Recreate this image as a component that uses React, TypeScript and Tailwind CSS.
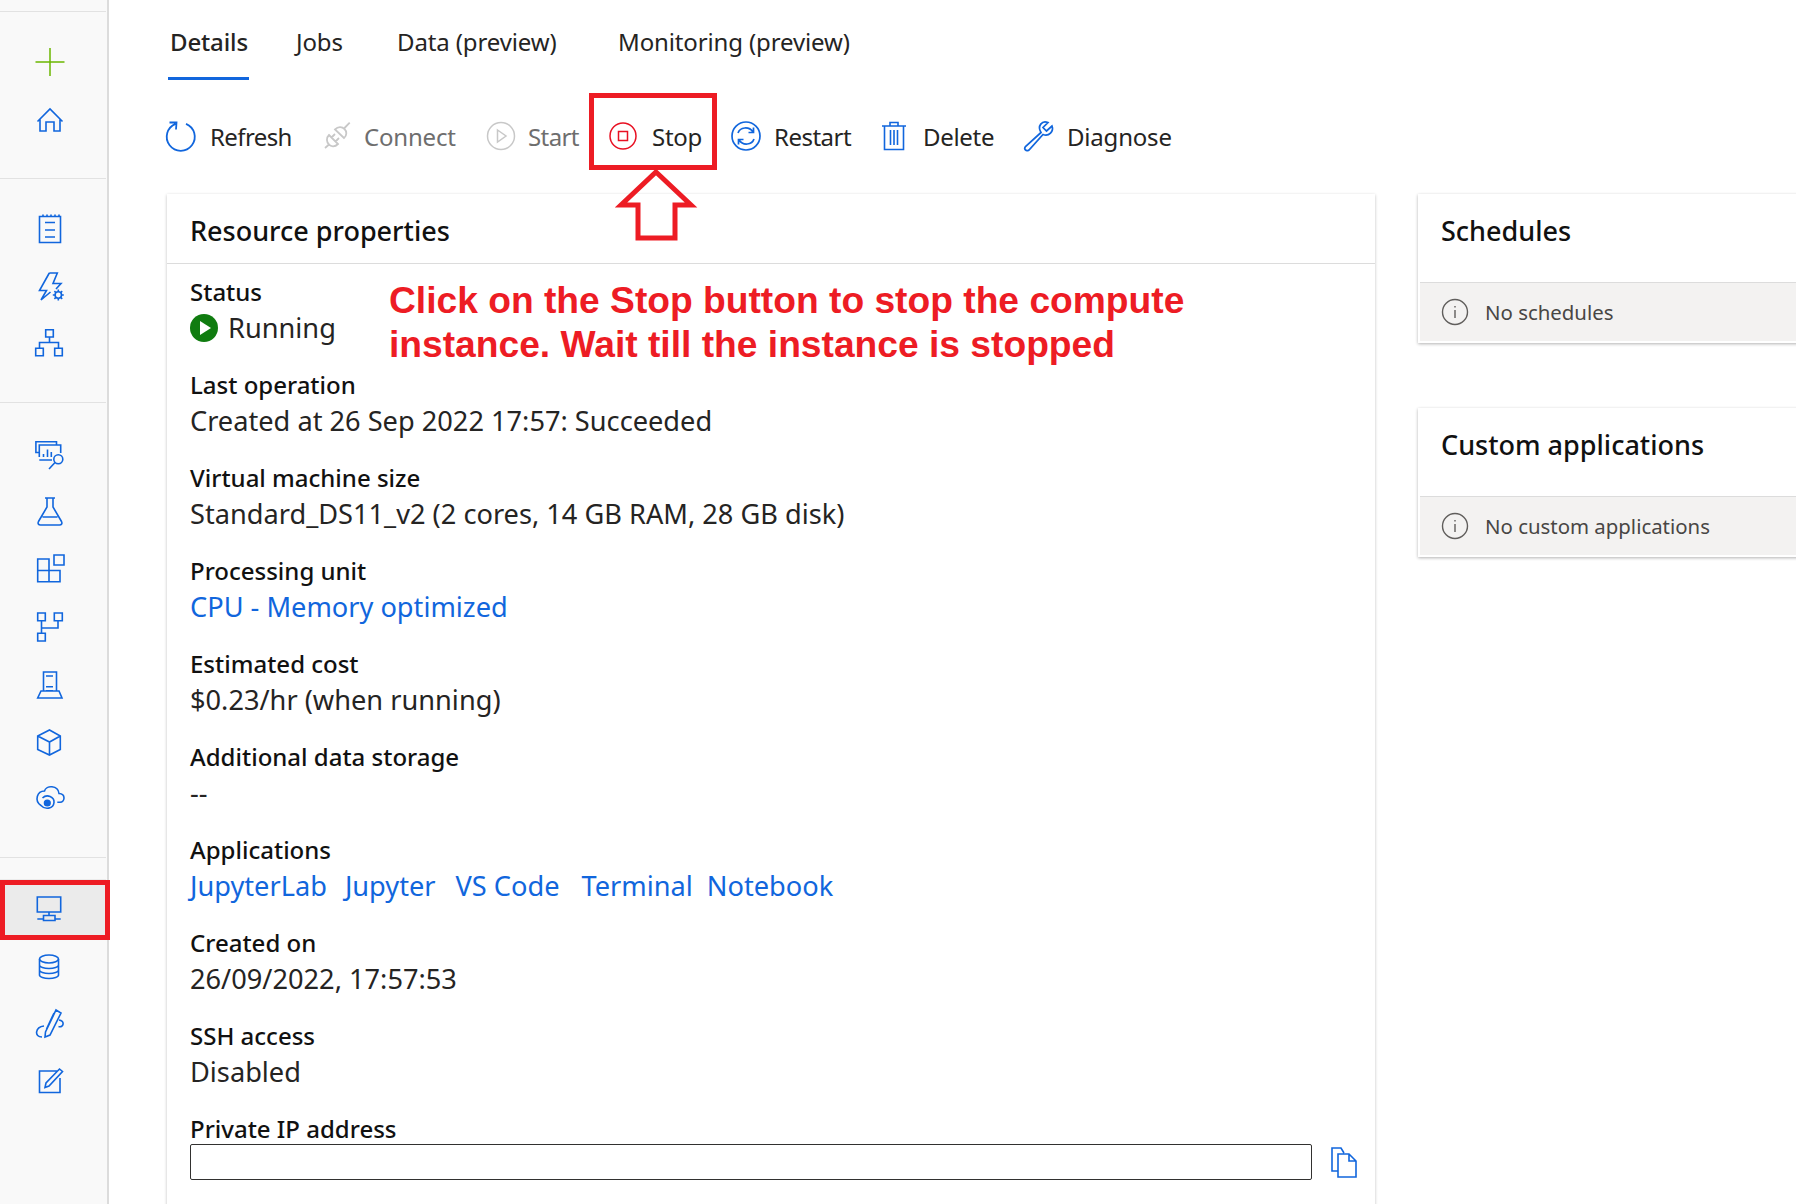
const BLUE = "#1166dd";

function Ico({ children, size = 32, color = BLUE, sw = 1.6 }: { children: React.ReactNode; size?: number; color?: string; sw?: number }) {
  return (
    <svg width={size} height={size} viewBox="0 0 32 32" fill="none" stroke={color} strokeWidth={sw} overflow="visible">
      {children}
    </svg>
  );
}

const sideGroups = [
  [
    <Ico color="#6bb700" sw={1.5}><path d="M1.5 16H30.5M16 2V30" /></Ico>,
    <Ico><path d="M3.5 17.5L16 5L28.5 17.5M6 15.5V27H12V18H20V27H26V15.5" /></Ico>,
  ],
  [
    <Ico><path d="M5.5 3.5H26.5V29.5H5.5ZM9 1.5V3.5M13 1.5V3.5M17 1.5V3.5M21 1.5V3.5M25 1.5V3.5M11 9.5H21M11 17H21M11 24H21" /></Ico>,
    <Ico><g transform="translate(0 -2)"><path d="M15.3 4H23.3L19 14.5H27L22 20M15.3 4L5.5 21.5H12.5L7 31L16.5 23" /><circle cx="24.3" cy="26" r="3.2" /><path d="M24.3 20.5V22.8M24.3 29.2V31.5M18.8 26H21.1M27.5 26H29.8M20.4 22.1L22 23.7M28.2 22.1L26.6 23.7M20.4 29.9L22 28.3M28.2 29.9L26.6 28.3" /></g></Ico>,
    <Ico><path transform="translate(0 -2)" d="M11.7 2.7H19.3V10H11.7ZM1.7 21.3H9.3V28.7H1.7ZM20.7 21.3H28.3V28.7H20.7ZM15.5 10V15.5M5.5 21.3V15.5H24.5V21.3" /></Ico>,
  ],
  [
    <Ico><g transform="translate(0 1)"><path d="M5.3 14.5H1.9V3.7H22.5V7M5.3 19V7H26.7V15M9.5 19V16M13.5 19V11.5M17.3 19V14M5.3 22H18" /><circle cx="24.3" cy="21.3" r="4.5" /><path d="M21 24.5L15 31" /></g></Ico>,
    <Ico><path d="M11 3H21M13 3V12L4.5 26.5C3.5 28.5 4.5 30 6.5 30H25.5C27.5 30 28.5 28.5 27.5 26.5L19 12V3M8.5 22H23.5" /></Ico>,
    <Ico><path d="M3.7 6H15V28.7H3.7ZM3.7 17.5H26V28.7H15M20 2H30V12H20Z" /></Ico>,
    <Ico><path d="M3.7 2H11.3V9.7H3.7ZM20.3 2H28.3V9.7H20.3ZM3.7 22.3H11.3V30H3.7ZM7.5 9.7V22.3M7.5 17H24V9.7" /></Ico>,
    <Ico><path d="M9.5 22V3H22.5V22M12 7H19M12 17.7H19M12 21.7H19M7 22H25L28 29H3.7Z" /></Ico>,
    <Ico><path transform="translate(0 -1)" d="M15.5 4L26.3 10V23.5L15.5 29L3.7 23.5V10ZM3.7 10L15.5 16L26.3 10M15.5 16V29" /></Ico>,
    <Ico><g transform="translate(0 -3)"><path d="M23.3 20.3H26C31 20 32 12 25 11.5C24 3 12 3 10.5 9C3 9 0 19 7 23.5C11 28 19.5 27 20 20.5C20.5 15 13 11.5 8.5 16" /><circle cx="13.3" cy="21" r="2.8" fill={BLUE} /></g></Ico>,
  ],
  [
    <Ico><path transform="translate(0 1)" d="M3.3 4H26.7V19H3.3ZM15 19V22.5M9.5 27.5H21V22.5H9.5ZM3.3 26H9.5M21 26H26.7" /></Ico>,
    <Ico><g transform="translate(0 1)"><ellipse cx="15" cy="8" rx="9.5" ry="4" /><path d="M5.5 8V24C5.5 26 10 27.5 15 27.5C20 27.5 24.5 26 24.5 24V8M5.5 14C5.5 16 10 17.5 15 17.5C20 17.5 24.5 16 24.5 14M5.5 19C5.5 21 10 22.5 15 22.5C20 22.5 24.5 21 24.5 19" /></g></Ico>,
    <Ico><path d="M22 2L27 5L16 27L11 29L11.5 24ZM20 5L12.5 21M25 12C31 13 30 20 24.5 18.5M10 18C1 19 0 29 8 29" /></Ico>,
    <Ico><path transform="translate(0 -1)" d="M24 6H5.5V27.5H26V13M11 22.5L12 18L25.5 4L28.5 6.5L15 21Z" /></Ico>,
  ],
];

function Sidebar() {
  return (
    <div className="w-[109px] shrink-0 h-full bg-[#f9f9f9] border-r-2 border-[#dcdcdc] pt-[11px] pr-px">
      {sideGroups.map((group, i) => (
        <div key={i} className={`border-t border-[#e2e2e2] pt-[21px] ${i === 0 ? "pb-[29px]" : i === 2 ? "pb-[27px]" : "pb-[28px]"}`}>
          {group.map((icon, j) => (
            <div key={j} className={`h-[58px] flex items-center justify-center pb-px pr-[7px] ${i === 3 && j === 0 ? "bg-[#ebebeb]" : ""}`}>
              {icon}
            </div>
          ))}
        </div>
      ))}
    </div>
  );
}

const toolbarItems = [
  {
    label: "Refresh",
    w: "w-[156px] -ml-[2px]",
    box: "w-[45px]",
    muted: false,
    track: "tracking-[-0.6px]",
    icon: <Ico sw={1.8}><path d="M10.5 3.8A14 14 0 1 0 21 3.8M4.5 2.5H11.5L11 9.5" /></Ico>,
  },
  {
    label: "Connect",
    w: "w-[164px]",
    box: "w-[43px]",
    muted: true,
    track: "tracking-[-0.2px]",
    icon: <Ico color="#c8c8c8" sw={1.8}><path d="M28.7 2.7L23.5 8M14 9.5C17 6.5 21 6.5 23.5 9C26 11.5 26 15.5 23 18ZM8 15L17 24C14 27 10 27 8 24.5C5.5 22 5 18 8 15ZM10.5 17.5L14 14M14.5 21.5L18 18M8 24.5L4 28" /></Ico>,
  },
  {
    label: "Start",
    w: "w-[122px]",
    box: "w-[43px]",
    muted: true,
    track: "tracking-[-0.6px]",
    icon: <Ico color="#c8c8c8" sw={1.5}><circle cx="16" cy="16" r="13.5" /><path d="M12.5 10L21 16L12.5 22Z" /></Ico>,
  },
  {
    label: "Stop",
    w: "w-[123px]",
    box: "w-[45px]",
    muted: false,
    track: "tracking-[-0.3px]",
    icon: <Ico color="#e81123" sw={1.5}><circle cx="16" cy="16" r="13" /><path d="M11.5 11.5H20.5V20.5H11.5Z" /></Ico>,
  },
  {
    label: "Restart",
    w: "w-[148px]",
    box: "w-[44px]",
    muted: false,
    track: "tracking-[-0.5px]",
    icon: <Ico sw={1.7}><circle cx="16" cy="16" r="14" /><path d="M8 13C10 7 19 6 23 12M23.5 7.5V12.5H18.5M24 19C22 25 13 26 9 20M8.5 24.5V19.5H13.5" /></Ico>,
  },
  {
    label: "Delete",
    w: "w-[144px]",
    box: "w-[45px]",
    muted: false,
    track: "tracking-[-0.3px]",
    icon: <Ico sw={1.6}><path d="M4 6H28M12 6V2.5H20V6M6.5 6V29.5H25.5V6M12.5 10V25M16 10V25M19.5 10V25" /></Ico>,
  },
  {
    label: "Diagnose",
    w: "w-[160px]",
    box: "w-[45px]",
    muted: false,
    track: "tracking-[-0.2px]",
    icon: <Ico sw={1.7}><path d="M19 12.5L3.5 26.5C1.5 29 4 32 7 30L21 14.5C27 17 32 11 30 6L24.5 11L21 7.5L26 2.5C20 0 15 6 19 12.5Z" /></Ico>,
  },
];

function Toolbar() {
  return (
    <div className="flex items-center h-[50px] mt-[32px] text-[24px]">
      {toolbarItems.map((item) => (
        <div key={item.label} className={`${item.w} shrink-0 flex items-center`}>
          <div className={`${item.box} shrink-0 flex justify-start -mt-[2px]`}>{item.icon}</div>
          <span className={`${item.track} ${item.muted ? "text-[#6e6e6e]" : "text-[#252423]"}`}>{item.label}</span>
        </div>
      ))}
    </div>
  );
}

function Field({ label, children }: { label: string; children: React.ReactNode }) {
  return (
    <div className="h-[93px]">
      <div className="text-[24px] leading-[35px] font-medium text-[#111]">{label}</div>
      <div className="text-[27.2px] leading-[37px] text-[#252423]">{children}</div>
    </div>
  );
}

function SideCard({ title, note, mt }: { title: string; note: string; mt: string }) {
  return (
    <div className={`${mt} bg-white shadow-[0_1px_3px_rgba(0,0,0,0.3)] pl-[2px] h-[149px] flex flex-col`}>
      <div className="h-[88px] pl-[21px] pt-[15px] text-[27px] leading-[44px] font-medium text-[#111]">{title}</div>
      <div className="h-[59px] bg-[#f3f2f1] border-t border-[#dcdcdc] pl-[21px] flex items-center text-[20.4px] text-[#484644]">
        <svg width="28" height="28" viewBox="0 0 28 28" fill="none" stroke="#605e5c" strokeWidth="1.4" className="mr-[16px]">
          <circle cx="14" cy="14" r="12.5" />
          <path d="M14 12V20M14 8V9.6" />
        </svg>
        {note}
      </div>
    </div>
  );
}

export default function App() {
  return (
    <div className="relative h-[1204px] w-[1796px] overflow-hidden bg-white flex font-['Noto_Sans',sans-serif]">
      <Sidebar />

      <div className="flex-1 pl-[58px] min-w-0">
        <div className="flex h-[80px] text-[24px] text-[#252423] tracking-[-0.13px]">
          <div className="w-[129px]">
            <div className="ml-px w-[81px] h-[80px] pt-[24px] pl-[2px] leading-[36px] font-medium border-b-[3px] border-[#1166dd]">Details</div>
          </div>
          <div className="w-[101px] pt-[24px] leading-[36px]">Jobs</div>
          <div className="w-[221px] pt-[24px] leading-[36px]">Data (preview)</div>
          <div className="pt-[24px] leading-[36px]">Monitoring (preview)</div>
        </div>

        <Toolbar />

        <div className="flex mt-[32px] items-start">
          <div className="w-[1208px] h-[1100px] shrink-0 bg-white shadow-[0_1px_3px_rgba(0,0,0,0.25)]">
            <div className="h-[70px] border-b border-[#dcdcdc] pl-[23px] pt-[15px] text-[27px] leading-[44px] font-medium text-[#111]">
              Resource properties
            </div>
            <div className="pl-[23px] pr-[16px] pt-[10px]">
              <Field label="Status">
                <span className="flex items-center">
                  <svg width="28" height="28" viewBox="0 0 28 28" className="mr-[10px]">
                    <circle cx="14" cy="14" r="14" fill="#107c10" />
                    <path d="M10 7L21 14L10 21Z" fill="#fff" />
                  </svg>
                  Running
                </span>
              </Field>
              <Field label="Last operation">Created at 26 Sep 2022 17:57: Succeeded</Field>
              <Field label="Virtual machine size">Standard_DS11_v2 (2 cores, 14 GB RAM, 28 GB disk)</Field>
              <Field label="Processing unit">
                <span className="text-[#1166dd]">CPU - Memory optimized</span>
              </Field>
              <Field label="Estimated cost">$0.23/hr (when running)</Field>
              <Field label="Additional data storage">--</Field>
              <Field label="Applications">
                <span className="flex text-[#1166dd]">
                  <span>JupyterLab</span>
                  <span className="ml-[18px]">Jupyter</span>
                  <span className="ml-[20px]">VS Code</span>
                  <span className="ml-[22px]">Terminal</span>
                  <span className="ml-[14px]">Notebook</span>
                </span>
              </Field>
              <Field label="Created on">26/09/2022, 17:57:53</Field>
              <Field label="SSH access">Disabled</Field>
              <div className="text-[24px] leading-[30px] pt-[3px] h-[33px] font-medium text-[#111]">Private IP address</div>
              <div className="flex items-center">
                <div className="w-[1122px] h-[36px] border-[1.5px] border-[#323130] rounded-[2px]" />
                <svg width="28" height="32" viewBox="0 0 28 32" fill="none" stroke={BLUE} strokeWidth="1.6" className="ml-[18px]">
                  <path d="M8 25H2V2H11L14 7M8 8H19L26 15V31H8ZM19 8V15H26" />
                </svg>
              </div>
            </div>
          </div>

          <div className="ml-[43px] flex-1 min-w-[400px]">
            <SideCard title="Schedules" note="No schedules" mt="mt-0" />
            <SideCard title="Custom applications" note="No custom applications" mt="mt-[65px]" />
          </div>
        </div>
      </div>

      {/* red annotations pasted over the screenshot */}
      <div className="absolute left-[589px] top-[93px] w-[128px] h-[77px] border-[5px] border-[#ed1c24]" />
      <svg className="absolute left-[615px] top-[168px]" width="85" height="75" viewBox="0 0 85 75" fill="none" stroke="#ed1c24" strokeWidth="5">
        <path d="M41 4L76 37H60V70H23V37H6Z" />
      </svg>
      <div className="absolute left-0 top-[880px] w-[110px] h-[60px] border-[5px] border-[#ed1c24]" />
      <div className="absolute left-[389px] top-[278px] text-[37.2px] leading-[44px] font-bold text-[#ed1c24] font-['Liberation_Sans',sans-serif]">
        Click on the Stop button to stop the compute
        <br />
        instance. Wait till the instance is stopped
      </div>
    </div>
  );
}
